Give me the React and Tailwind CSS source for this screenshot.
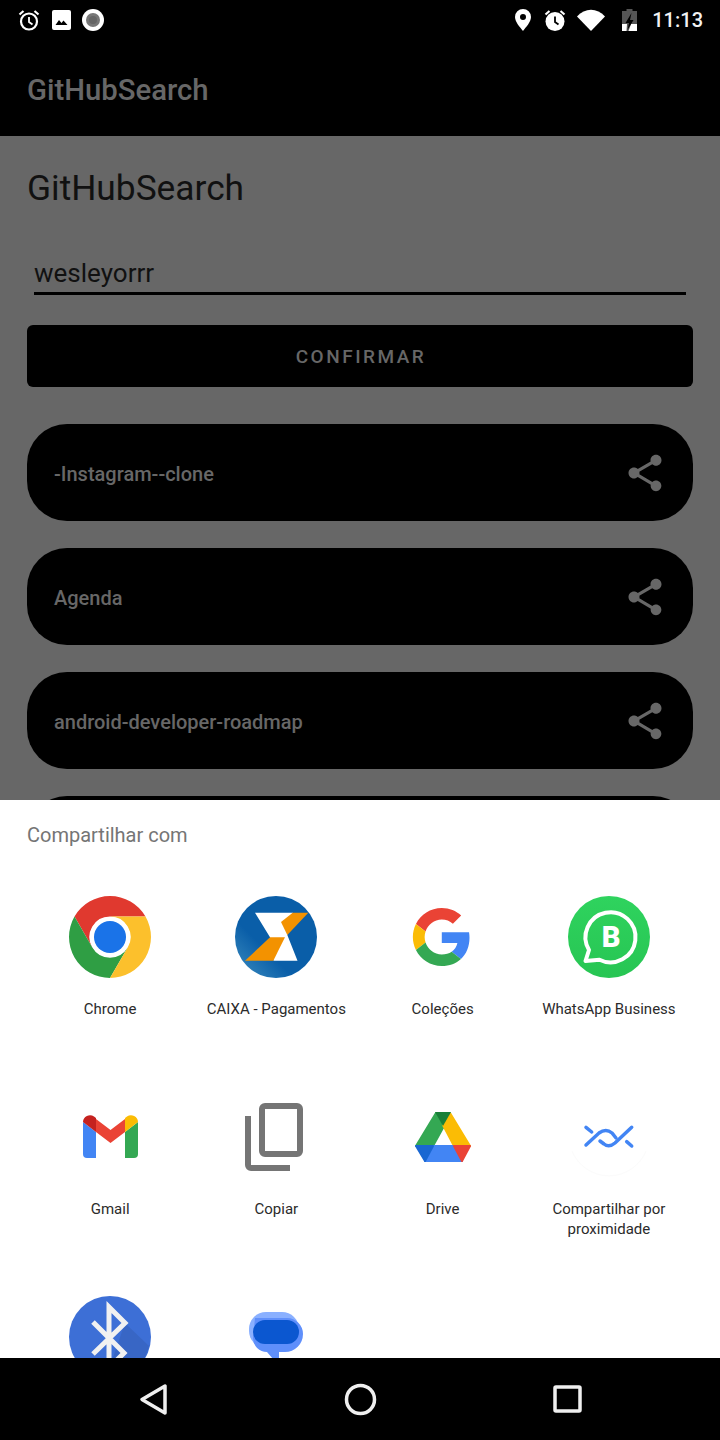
const repos = ['-Instagram--clone', 'Agenda', 'android-developer-roadmap', '']

function ShareIcon() {
  return (
    <svg width="44" height="44" viewBox="0 0 24 24" fill="#676767">
      <path d="M18 16.08c-.76 0-1.44.3-1.96.77L8.91 12.7c.05-.23.09-.46.09-.7s-.04-.47-.09-.7l7.05-4.11c.54.5 1.25.81 2.04.81 1.66 0 3-1.34 3-3s-1.34-3-3-3-3 1.34-3 3c0 .24.04.47.09.7L8.04 9.81C7.5 9.31 6.79 9 6 9c-1.66 0-3 1.34-3 3s1.34 3 3 3c.79 0 1.5-.31 2.04-.81l7.12 4.16c-.05.21-.08.43-.08.65 0 1.61 1.31 2.92 2.92 2.92 1.61 0 2.92-1.31 2.92-2.92s-1.31-2.92-2.92-2.92z" />
    </svg>
  )
}

function Chrome() {
  return (
    <svg width="82" height="82" viewBox="0 0 82 82">
      <path d="M5.5 20.5A41 41 0 0 1 76.500 20.500L41 20.500A20.500 20.500 0 0 0 23.200 51.300Z" fill="#e0392f" />
      <path d="M5.500 20.500A41 41 0 0 0 41 82L58.800 51.300A20.500 20.500 0 0 1 23.200 51.300Z" fill="#2f9e44" />
      <path d="M76.500 20.500A41 41 0 0 1 41 82L58.800 51.300A20.500 20.500 0 0 0 41 20.500Z" fill="#fcc02c" />
      <circle cx="41" cy="41" r="20" fill="#fff" />
      <circle cx="41" cy="41" r="16" fill="#1a73e8" />
    </svg>
  )
}

function Caixa() {
  return (
    <svg width="82" height="82" viewBox="0 0 82 82">
      <defs>
        <linearGradient id="caixaBg" x1="0" y1="1" x2="0.6" y2="0.4">
          <stop offset="0" stopColor="#3f8fc0" />
          <stop offset="0.6" stopColor="#0a5ea8" />
        </linearGradient>
      </defs>
      <circle cx="41" cy="41" r="41" fill="url(#caixaBg)" />
      <path d="M20 16.700H58L52.300 39L62.500 64.700H38.500L35 41.300Z" fill="#fff" />
      <path d="M57.700 16.700H73.300L52.300 39L46 26Z" fill="#f39200" />
      <path d="M35 41.300H50L38.300 64.700H10Z" fill="#f39200" />
    </svg>
  )
}

function GoogleG() {
  return (
    <svg width="82" height="82" viewBox="-9 -10 68 68">
      <path d="M24 9.500c3.540 0 6.710 1.220 9.210 3.600l6.850-6.850C35.900 2.380 30.470 0 24 0 14.620 0 6.510 5.380 2.560 13.220l7.980 6.190C12.430 13.720 17.740 9.500 24 9.500z" fill="#ea4335" />
      <path d="M46.980 24.550c0-1.570-.15-3.090-.38-4.550H24v9.020h12.940c-.58 2.960-2.260 5.480-4.780 7.180l7.730 6c4.510-4.180 7.090-10.360 7.090-17.650z" fill="#4285f4" />
      <path d="M10.530 28.590c-.48-1.450-.76-2.990-.76-4.590s.27-3.140.76-4.590l-7.980-6.190C.92 16.460 0 20.120 0 24c0 3.880.92 7.540 2.560 10.780l7.970-6.190z" fill="#fbbc05" />
      <path d="M24 48c6.480 0 11.930-2.130 15.890-5.810l-7.730-6c-2.150 1.450-4.920 2.300-8.160 2.300-6.260 0-11.570-4.220-13.470-9.910l-7.980 6.190C6.510 42.620 14.620 48 24 48z" fill="#34a853" />
    </svg>
  )
}

function WhatsAppBusiness() {
  return (
    <svg width="82" height="82" viewBox="0 0 82 82">
      <defs>
        <linearGradient id="waBg" x1="0" y1="0" x2="0" y2="1">
          <stop offset="0" stopColor="#2fd35e" />
          <stop offset="1" stopColor="#27c553" />
        </linearGradient>
      </defs>
      <circle cx="41" cy="41" r="41" fill="url(#waBg)" />
      <path d="M17.500 65L21 54A25 25 0 1 1 31.500 63.700Z" fill="none" stroke="#fff" strokeWidth="4" strokeLinejoin="round" />
      <text x="43" y="51" textAnchor="middle" fontFamily="Roboto, sans-serif" fontWeight="900" fontSize="29" fill="#fff">B</text>
    </svg>
  )
}

function Gmail() {
  return (
    <svg width="82" height="82" viewBox="0 0 82 82">
      <path d="M14 26L27 36V62H18a4 4 0 0 1-4-4Z" fill="#4285f4" />
      <path d="M69 26L56 36V62H65a4 4 0 0 0 4-4Z" fill="#34a853" />
      <path d="M27 23L41.500 34L56 23V36L41.500 47L27 36Z" fill="#ea4335" />
      <path d="M14 26a7 7 0 0 1 11-5.500L27 22V36Z" fill="#c5221f" />
      <path d="M69 26a7 7 0 0 0-11-5.500L56 22V36Z" fill="#fbbc04" />
    </svg>
  )
}

function Copy() {
  return (
    <svg width="82" height="82" viewBox="0 0 82 82">
      <rect x="27" y="10" width="38" height="48" rx="3" fill="none" stroke="#757575" strokeWidth="6" />
      <path d="M13 20V69a3 3 0 0 0 3 3H55" fill="none" stroke="#757575" strokeWidth="6" />
    </svg>
  )
}

function Drive() {
  return (
    <svg width="82" height="82" viewBox="0 0 82 82" strokeLinejoin="round">
      <path d="M34 17L42 30L31 50H14Z" fill="#34a853" stroke="#34a853" strokeWidth="2" />
      <path d="M48 17L68 50H52L41 29Z" fill="#fbbc04" stroke="#fbbc04" strokeWidth="2" />
      <path d="M33 16H49L41 30Z" fill="#188038" />
      <path d="M31 50H52L60 65H23Z" fill="#4285f4" stroke="#4285f4" strokeWidth="2" />
      <path d="M14 50H31L23 65Z" fill="#1967d2" stroke="#1967d2" strokeWidth="2" />
      <path d="M52 50H68L60 65Z" fill="#ea4335" stroke="#ea4335" strokeWidth="2" />
    </svg>
  )
}

function Nearby() {
  return (
    <svg width="82" height="82" viewBox="0 0 82 82" fill="none">
      <path d="M4 55A40 40 0 0 0 78 55" stroke="#fbfbfb" strokeWidth="1" />
      <g stroke="#4285f4" strokeWidth="3.500" strokeLinecap="round">
        <path d="M18 31.300L23.700 36" />
        <path d="M18 49L31 37Q38 32 44 37L48 42" />
        <path d="M32 45L36 48Q41 52 47 47L63.700 31.300" />
        <path d="M58.700 45.700L63.700 50" />
      </g>
    </svg>
  )
}

function Bluetooth() {
  return (
    <svg width="82" height="82" viewBox="0 0 82 82">
      <circle cx="41" cy="41" r="41" fill="#3d6fd6" />
      <path d="M56 27L80 50A41 41 0 0 1 60 77L40 73Z" fill="#000" opacity="0.08" />
      <path d="M24 26L55 57L40 72V11L56 27L24 58" fill="none" stroke="#f1f1f1" strokeWidth="5" />
    </svg>
  )
}

function Messages() {
  return (
    <svg width="82" height="82" viewBox="0 0 82 82">
      <rect x="14" y="16" width="50" height="36" rx="17" fill="#8ab0ff" />
      <path d="M20 22H52A16 16 0 0 1 68 38A18 18 0 0 1 50 56H44V70L32 56A14 14 0 0 1 18 42Z" fill="#5f8ffb" />
      <rect x="18" y="24" width="46" height="24" rx="12" fill="#0b57d0" />
    </svg>
  )
}

const apps = [
  { id: 'chrome', name: 'Chrome', icon: Chrome },
  { id: 'caixa', name: 'CAIXA - Pagamentos', icon: Caixa },
  { id: 'colecoes', name: 'Coleções', icon: GoogleG },
  { id: 'wa', name: 'WhatsApp Business', icon: WhatsAppBusiness },
  { id: 'gmail', name: 'Gmail', icon: Gmail },
  { id: 'copy', name: 'Copiar', icon: Copy },
  { id: 'drive', name: 'Drive', icon: Drive },
  { id: 'nearby', name: 'Compartilhar por proximidade', icon: Nearby },
  { id: 'bt', name: '', icon: Bluetooth },
  { id: 'msg', name: '', icon: Messages },
]

export default function App() {
  return (
    <div className="w-[720px] h-[1440px] flex flex-col overflow-hidden bg-black font-[Roboto,sans-serif]">
      {/* Status bar */}
      <div className="h-10 shrink-0 flex items-center justify-between pl-[18px] pr-[17px] text-white">
        <div className="flex items-center gap-[11px]">
          <svg width="22" height="22" viewBox="0 0 22 22" fill="none" stroke="#fff">
            <circle cx="11" cy="12.500" r="8" strokeWidth="2.200" />
            <path d="M11 8V13L14.500 15.500" strokeWidth="1.800" />
            <path d="M1.500 5.500L5.500 2M20.500 5.500L16.500 2" strokeWidth="2.200" />
          </svg>
          <svg width="20" height="20" viewBox="0 0 20 20" className="ml-px -mr-px">
            <rect width="19" height="20" rx="2" fill="#fff" />
            <path d="M3.500 15L7 10L9.500 13L11.500 10.500L15.500 15Z" fill="#000" />
          </svg>
          <svg width="22" height="22" viewBox="0 0 22 22">
            <circle cx="11" cy="11" r="11" fill="#fff" />
            <circle cx="11" cy="11" r="7" fill="#777" />
            <circle cx="11" cy="11" r="4" fill="#666" />
          </svg>
        </div>
        <div className="flex items-center">
          <svg width="16" height="22" viewBox="0 0 16 22" className="mr-[13px]">
            <path fillRule="evenodd" d="M8 0A8 8 0 0 1 16 8C16 13 11 18 8 22C5 18 0 13 0 8A8 8 0 0 1 8 0ZM8 5A3 3 0 1 0 8 11A3 3 0 1 0 8 5Z" fill="#fff" />
          </svg>
          <svg width="22" height="22" viewBox="0 0 22 22" className="mr-[11px]">
            <circle cx="11" cy="12.500" r="9.500" fill="#fff" />
            <path d="M11 7.500V13L14.500 15.500" fill="none" stroke="#000" strokeWidth="1.800" />
            <path d="M1.500 5.500L5.500 2M20.500 5.500L16.500 2" stroke="#fff" strokeWidth="2.200" />
          </svg>
          <svg width="28" height="22" viewBox="0 0 28 22" className="mr-[17px]">
            <path d="M0 7.500C8 -1.500 20 -1.500 28 7.500L14 22Z" fill="#fff" />
          </svg>
          <svg width="15" height="22" viewBox="0 0 15 22" className="mr-[15px]">
            <path d="M4.500 0H10.500V2H15V22H0V2H4.500Z" fill="#555" />
            <path d="M0 15H5L4.500 22H0ZM9 15H15V22H6.500Z" fill="#fff" />
            <path d="M9.500 4L3.500 14H7L5.500 21L11.500 11H8Z" fill="#000" />
          </svg>
          <span className="text-[20px] leading-none font-medium text-[#f2f2f2]">11:13</span>
        </div>
      </div>

      {/* App bar */}
      <div className="h-24 shrink-0 flex items-center pl-[27px] pt-[6px]">
        <span className="text-[29.300px] font-medium text-[#676767]">GitHubSearch</span>
      </div>

      {/* Dimmed page */}
      <div className="h-[664px] shrink-0 overflow-hidden bg-[#676767] px-[27px]">
        <h1 className="mt-[28px] h-[48px] text-[35.300px] leading-[48px] text-[#111]">GitHubSearch</h1>
        <div className="mt-[29px] mx-[7px] h-[54px] pt-[14px] border-b-[3px] border-black text-[26px] leading-[36px] text-[#111]">wesleyorrr</div>
        <button className="mt-[30px] w-full h-[62px] pt-[3px] pl-[2px] rounded-md bg-black text-[#676767] text-[19px] font-medium tracking-[2.500px]">CONFIRMAR</button>
        <div className="mt-[37px] flex flex-col gap-[27px]">
          {repos.map((repo) => (
            <div key={repo} className="h-[97px] shrink-0 rounded-[40px] bg-black flex items-center justify-between pl-[27px] pr-[26px]">
              <span className="pt-[2px] text-[20px] font-medium text-[#676767]">{repo}</span>
              {repo && <ShareIcon />}
            </div>
          ))}
        </div>
      </div>

      {/* Share sheet */}
      <div className="h-[558px] shrink-0 overflow-hidden bg-white">
        <div className="pl-[27px] pt-[22px] h-[96px] text-[20px] leading-[26px] text-[#757575]">Compartilhar com</div>
        <div className="grid grid-cols-4 auto-rows-[200px] pl-[27px] pr-[28px]">
          {apps.map((app) => (
            <div key={app.id} className="flex flex-col items-center">
              <app.icon />
              {app.name && (
                <span className="mt-[21px] w-[160px] text-center text-[15px] leading-[20px] text-[#2b2b2b]">{app.name}</span>
              )}
            </div>
          ))}
        </div>
      </div>

      {/* Navigation bar */}
      <div className="h-[82px] shrink-0 flex items-center">
        <svg width="720" height="82" viewBox="0 0 720 82" fill="none" stroke="#efefef" strokeWidth="3.500" strokeLinejoin="round">
          <path d="M165 28V55L142 41.500Z" />
          <circle cx="360.500" cy="41.500" r="14" />
          <rect x="555" y="29" width="25" height="24" rx="1" />
        </svg>
      </div>
    </div>
  )
}
